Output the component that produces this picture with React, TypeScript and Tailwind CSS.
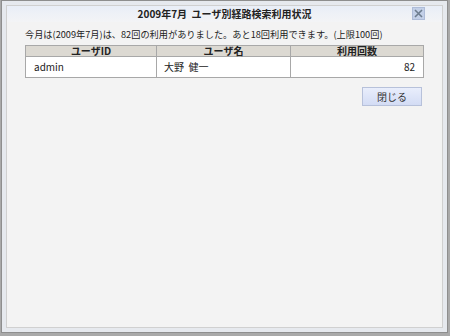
import React from "react";

const font = { fontFamily: '"Noto Sans CJK JP", "Liberation Sans", sans-serif' };

export default function App() {
  return (
    <div className="w-[450px] h-[336px] bg-[#a9a9a9] overflow-hidden" style={font}>
      <div className="ml-[1px] w-[447px] h-[333px] border border-[#8e8e8e] bg-[#e6e9ee] p-[4px]">
        <div className="h-full border border-[#d0d0d0] bg-[#f3f3f3] flex flex-col">
          {/* title bar */}
          <div className="h-[16px] relative flex items-center justify-center bg-gradient-to-b from-[#e9eef7] to-[#f3f4f6]">
            <span className="text-[10px] font-bold text-[#222] leading-none">
              2009年7月&nbsp;&nbsp;ユーザ別経路検索利用状況
            </span>
            <button className="absolute right-[17px] top-[1px] w-[13px] h-[13px] bg-[#c3d0e8] border border-[#aebcd8] flex items-center justify-center">
              <svg width="9" height="9" viewBox="0 0 9 9">
                <path d="M1 1L8 8M8 1L1 8" stroke="#6d7d8f" strokeWidth="1.6" />
              </svg>
            </button>
          </div>

          <div className="px-[18px] pt-[5px]">
            <p className="text-[9.2px] text-[#222] leading-[14px] h-[14px] whitespace-nowrap">
              今月は(2009年7月)は、82回の利用がありました。あと18回利用できます。(上限100回)
            </p>

            <table className="mt-[4px] w-[399px] border-collapse border border-[#a8a8a8] text-[10px] text-[#222]">
              <thead>
                <tr className="bg-[#dcd9d2] h-[11px] leading-[10px]">
                  <th className="w-[131px] border border-[#a8a8a8] font-bold p-0">ユーザID</th>
                  <th className="w-[134px] border border-[#a8a8a8] font-bold p-0">ユーザ名</th>
                  <th className="border border-[#a8a8a8] font-bold p-0">利用回数</th>
                </tr>
              </thead>
              <tbody>
                <tr className="bg-white h-[21px] leading-[12px]">
                  <td className="border border-[#a8a8a8] pl-[8px]">admin</td>
                  <td className="border border-[#a8a8a8] pl-[7px]">大野&nbsp;&nbsp;健一</td>
                  <td className="border border-[#a8a8a8] pr-[8px] text-right">82</td>
                </tr>
              </tbody>
            </table>

            <div className="flex justify-end mt-[9px] pr-[2px]">
              <button className="w-[60px] h-[19px] border border-[#b7c1da] bg-gradient-to-b from-[#e9eefc] to-[#d3dcf4] text-[10px] text-[#333] leading-none">
                閉じる
              </button>
            </div>
          </div>
        </div>
      </div>
    </div>
  );
}
